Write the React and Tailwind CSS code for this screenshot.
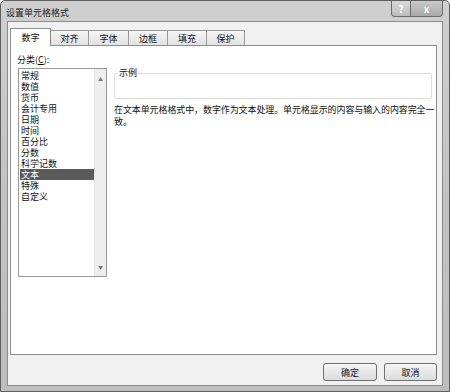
import React from 'react';

const tabs = ['数字', '对齐', '字体', '边框', '填充', '保护'];
const tabWidths = ['w-[41px]', 'w-[38px]', 'w-[40px]', 'w-[39px]', 'w-[39px]', 'w-[38px]'];
const categories = ['常规', '数值', '货币', '会计专用', '日期', '时间', '百分比', '分数', '科学记数', '文本', '特殊', '自定义'];

export default function App() {
  const selected = '文本';

  return (
    <div
      className="w-[450px] h-[392px] flex flex-col bg-gradient-to-b from-[#cfcfcf] via-[#c2c2c2] to-[#bdbdbd] border border-[#5e5e5e] rounded-t-[5px] text-[#111] text-[9px] leading-[11px]"
      style={{ fontFamily: '"Noto Sans CJK SC", "Noto Sans", sans-serif' }}
    >
      {/* title bar */}
      <div className="h-[20px] flex items-start shrink-0">
        <div className="pl-[5px] pt-[6px] text-[9px] text-[#1a1a1a]">设置单元格格式</div>
        <div className="ml-auto mr-[6px] flex">
          <div className="w-[20px] h-[16px] flex items-center justify-center border border-[#6d6d6d] border-t-0 rounded-bl-[4px] bg-gradient-to-b from-[#d9d9d9] to-[#bdbdbd] text-[10px] text-white font-bold">?</div>
          <div className="w-[32px] h-[16px] flex items-center justify-center border border-[#6d6d6d] border-t-0 border-l-0 rounded-br-[4px] bg-gradient-to-b from-[#c9c9c9] to-[#a9a9a9] text-[10px] text-white font-bold">x</div>
        </div>
      </div>

      {/* client area */}
      <div className="flex-1 flex flex-col mx-[6px] mb-[5px] bg-[#f0f0f0] border border-[#8c8c8c] pl-[2px] pr-[5px]">
        {/* tabs */}
        <div className="flex items-end h-[23px] shrink-0 relative z-10">
          {tabs.map((t, i) => (
            <div
              key={t}
              className={
                i === 0
                  ? `${tabWidths[i]} h-[18px] mb-[-1px] flex items-center justify-center bg-white border border-[#8c8c8c] border-b-0`
                  : `${tabWidths[i]} h-[15px] flex items-center justify-center bg-gradient-to-b from-[#f6f6f6] to-[#e2e2e2] border border-[#9a9a9a] border-l-0 border-b-0`
              }
            >
              {t}
            </div>
          ))}
        </div>

        {/* panel */}
        <div className="h-[310px] shrink-0 bg-white border border-[#8c8c8c] flex">
          <div className="pl-[6px] pt-[8px] flex flex-col">
            <div className="h-[14px]">分类(<span className="underline">C</span>):</div>
            <div className="ml-[1px] w-[89px] h-[209px] border border-[#9a9a9a] flex">
              <div className="flex-1 pt-[1px] pl-[1px]">
                {categories.map((c) => (
                  <div
                    key={c}
                    className={c === selected ? 'h-[11px] pl-[1px] bg-[#5a5a5a] text-white' : 'h-[11px] pl-[1px]'}
                  >
                    {c}
                  </div>
                ))}
              </div>
              <div className="w-[12px] bg-[#eeeeee] border-l border-[#e2e2e2] flex flex-col justify-between items-center py-[4px] text-[5px] text-[#777]">
                <span>▲</span>
                <span>▼</span>
              </div>
            </div>
          </div>

          <div className="flex-1 pl-[7px] pt-[27px]">
            <div className="relative h-[26px] mr-[4px] border border-[#dcdcdc] rounded-[2px]">
              <span className="absolute left-[3px] top-[-7px] bg-white px-[1px]">示例</span>
            </div>
            <div className="mt-[5px] leading-[12px] tracking-[-0.1px]">
              在文本单元格格式中，数字作为文本处理。单元格显示的内容与输入的内容完全一致。
            </div>
          </div>
        </div>

        {/* buttons */}
        <div className="flex justify-end gap-[7px] pt-[8px]">
          <div className="w-[54px] h-[18px] flex items-center justify-center border border-[#707070] rounded-[3px] bg-gradient-to-b from-[#f4f4f4] to-[#dcdcdc]">确定</div>
          <div className="w-[53px] h-[18px] flex items-center justify-center border border-[#707070] rounded-[3px] bg-gradient-to-b from-[#f4f4f4] to-[#dcdcdc]">取消</div>
        </div>
      </div>
    </div>
  );
}
